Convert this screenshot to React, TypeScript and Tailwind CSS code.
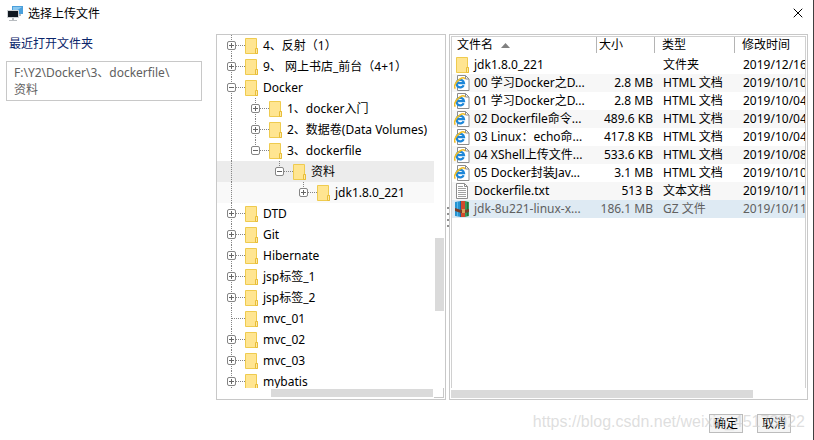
import type { ReactNode } from "react";
import { X } from "lucide-react";
import clsx from "clsx";

type TreeNode = {
  name: string;
  depth: number;
  state: "open" | "closed" | "leaf";
};

const tree: TreeNode[] = [
  { name: "4、反射（1）", depth: 0, state: "closed" },
  { name: "9、 网上书店_前台（4+1）", depth: 0, state: "closed" },
  { name: "Docker", depth: 0, state: "open" },
  { name: "1、docker入门", depth: 1, state: "closed" },
  { name: "2、数据卷(Data Volumes)", depth: 1, state: "closed" },
  { name: "3、dockerfile", depth: 1, state: "open" },
  { name: "资料", depth: 2, state: "open" },
  { name: "jdk1.8.0_221", depth: 3, state: "closed" },
  { name: "DTD", depth: 0, state: "closed" },
  { name: "Git", depth: 0, state: "closed" },
  { name: "Hibernate", depth: 0, state: "closed" },
  { name: "jsp标签_1", depth: 0, state: "closed" },
  { name: "jsp标签_2", depth: 0, state: "closed" },
  { name: "mvc_01", depth: 0, state: "leaf" },
  { name: "mvc_02", depth: 0, state: "closed" },
  { name: "mvc_03", depth: 0, state: "closed" },
  { name: "mybatis", depth: 0, state: "closed" },
];

const files = [
  { icon: "folder", name: "jdk1.8.0_221", size: "", type: "文件夹", date: "2019/12/16" },
  { icon: "html", name: "00 学习Docker之D...", size: "2.8 MB", type: "HTML 文档", date: "2019/10/10" },
  { icon: "html", name: "01 学习Docker之D...", size: "2.8 MB", type: "HTML 文档", date: "2019/10/04" },
  { icon: "html", name: "02 Dockerfile命令...", size: "489.6 KB", type: "HTML 文档", date: "2019/10/04" },
  { icon: "html", name: "03 Linux：echo命...", size: "417.8 KB", type: "HTML 文档", date: "2019/10/04" },
  { icon: "html", name: "04 XShell上传文件...", size: "533.6 KB", type: "HTML 文档", date: "2019/10/08" },
  { icon: "html", name: "05 Docker封装Jav...", size: "3.1 MB", type: "HTML 文档", date: "2019/10/10" },
  { icon: "text", name: "Dockerfile.txt", size: "513 B", type: "文本文档", date: "2019/10/11" },
  { icon: "archive", name: "jdk-8u221-linux-x...", size: "186.1 MB", type: "GZ 文件", date: "2019/10/11" },
];

function FolderIcon() {
  return (
    <svg width="14" height="16" viewBox="0 0 14 16" className="shrink-0">
      <path d="M.5.5h11v10h1v5H.5z" fill="#ffe591" stroke="#efcb4f" />
      <path d="M10.5 10.5h2v5h-2z" fill="#ffeaa5" stroke="#e8bd38" />
    </svg>
  );
}

function HtmlIcon() {
  return (
    <svg width="16" height="16" viewBox="0 0 16 16" className="shrink-0">
      <path d="M3.5.5h8l3.500 3.500v11.500h-11.500z" fill="#fff" stroke="#8c8c8c" />
      <path d="M11.500.5v3.500h3.500" fill="none" stroke="#8c8c8c" />
      <path d="M9.700 10.200A3.800 3.800 0 1 1 10 8.200H3" fill="none" stroke="#1c86d8" strokeWidth="2.200" />
      <path d="M1.500 13.500C-1 12 2 6.500 6 4c2.500-1.600 4.500-1.700 4.700.2" fill="none" stroke="#f0bd27" strokeWidth="1.500" />
    </svg>
  );
}

function TextIcon() {
  return (
    <svg width="16" height="16" viewBox="0 0 16 16" className="shrink-0">
      <path d="M2.500.5h8l3 3v12h-11z" fill="#fff" stroke="#8c8c8c" />
      <path d="M10.500.5v3h3" fill="none" stroke="#8c8c8c" />
      <path d="M4 3.500h5M4 5.500h8M4 7.500h8M4 9.500h8M4 11.500h8M4 13.500h8" stroke="#a0a0a0" />
    </svg>
  );
}

function ArchiveIcon() {
  return (
    <svg width="16" height="16" viewBox="0 0 16 16" className="shrink-0">
      <path d="M1 1l6-1v16l-6-1z" fill="#2594d2" />
      <path d="M7 0h4v16H7z" fill="#d2492c" />
      <path d="M11 0l4 1v14l-4 1z" fill="#37955a" />
      <path d="M3.500 1v14" stroke="#56b6e8" />
      <path d="M6.500 0v16" stroke="#176a9c" />
      <path d="M13.500 1v14" stroke="#23713b" />
      <path d="M1 7l6 2h4l4-1v3l-4 1H7l-6-2z" fill="#7b3f28" />
      <path d="M8 8h3v4H8z" fill="#d9a25a" />
    </svg>
  );
}

const icons: Record<string, ReactNode> = {
  folder: <FolderIcon />,
  html: <HtmlIcon />,
  text: <TextIcon />,
  archive: <ArchiveIcon />,
};

function AppIcon() {
  return (
    <svg width="16" height="16" viewBox="0 0 16 16" className="shrink-0">
      <path d="M5 0h11v8H5z" fill="#4ba0dc" />
      <path d="M6 1h9L6 7z" fill="#8bc8ef" />
      <path d="M12 8h2v2h-2z" fill="#b8bcc0" />
      <path d="M0 4h12v8H0z" fill="#cfd3d6" />
      <path d="M1 5h10v6H1z" fill="#111820" />
      <path d="M5 12h2v2H5zM2 14h8v1H2z" fill="#b8bcc0" />
    </svg>
  );
}

// The vertical guide of a top-level folder, seen beside its children
function Rail() {
  return (
    <svg width="24" height="21" viewBox="0 0 24 21" className="shrink-0">
      <path d="M10.500 0v21" stroke="#858585" strokeDasharray="1 1" />
    </svg>
  );
}

function Branch({ state, last }: { state: TreeNode["state"]; last: boolean }) {
  return (
    <svg width="24" height="21" viewBox="0 0 24 21" className="shrink-0">
      <path d={last ? "M10.500 0v10" : "M10.500 0v21"} stroke="#858585" strokeDasharray="1 1" />
      <path d="M11 10.500h13" stroke="#858585" strokeDasharray="1 1" />
      {state !== "leaf" && (
        <>
          <rect x="6.500" y="6.500" width="8" height="8" rx="1.500" fill="#fff" stroke="#858585" />
          <path d="M8 10.500h5" stroke="#666" />
          {state === "closed" && <path d="M10.500 8v5" stroke="#666" />}
        </>
      )}
    </svg>
  );
}

function FolderTree() {
  return (
    <ul className="min-h-0 flex-1 overflow-hidden">
      {tree.map((node, index) => (
        <li key={node.name}>
          <button
            type="button"
            className={clsx(
              "flex h-[21px] w-full items-center whitespace-nowrap pl-1 text-left",
              node.depth === 2 && "bg-[#ececec]",
              node.depth === 3 && "bg-[#f9f9f9]",
            )}
          >
            {node.depth > 0 && <Rail />}
            {node.depth > 1 && <span className="w-6 shrink-0" />}
            {node.depth > 2 && <span className="w-6 shrink-0" />}
            <Branch
              state={node.state}
              last={node.depth > 0 && tree[index + 1]?.depth !== node.depth}
            />
            <FolderIcon />
            <span className="pl-1">{node.name}</span>
          </button>
        </li>
      ))}
    </ul>
  );
}

function FileTable() {
  return (
    <table className="w-full table-fixed border-collapse whitespace-nowrap">
      <colgroup>
        <col className="w-[145px]" />
        <col className="w-[58px]" />
        <col className="w-20" />
        <col />
      </colgroup>
      <thead>
        <tr className="h-[19px] text-left align-top">
          <th className="p-0 font-normal">
            <div className="flex h-4 items-center gap-2 border-r border-[#b4b4b4] pl-[5px]">
              文件名
              <svg width="9" height="5" viewBox="0 0 9 5">
                <path d="M4.500 0L9 5H0z" fill="#808080" />
              </svg>
            </div>
          </th>
          <th className="p-0 font-normal">
            <div className="flex h-4 items-center border-r border-[#b4b4b4] pl-0.5">大小</div>
          </th>
          <th className="p-0 font-normal">
            <div className="flex h-4 items-center border-r border-[#b4b4b4] pl-[7px]">类型</div>
          </th>
          <th className="p-0 font-normal">
            <div className="flex h-4 items-center pl-[7px]">修改时间</div>
          </th>
        </tr>
      </thead>
      <tbody className="leading-[18px]">
        {files.map((file) => (
          <tr
            key={file.name}
            className={clsx(
              "h-[18px]",
              file.icon === "archive" ? "bg-[#deeaf3] text-[#606060]" : "even:bg-[#f7f7f7]",
            )}
          >
            <td className="p-0">
              <div className="flex h-[18px] items-center pl-0.5">
                <span className={clsx("w-5 shrink-0", file.icon === "folder" && "pl-0.5")}>
                  {icons[file.icon]}
                </span>
                {file.name}
              </div>
            </td>
            <td className="p-0 pr-0.5 text-right">{file.size}</td>
            <td className="p-0 pl-2">{file.type}</td>
            <td className="p-0 pl-2">{file.date}</td>
          </tr>
        ))}
      </tbody>
    </table>
  );
}

export default function App() {
  return (
    <div className="flex h-screen flex-col overflow-hidden border-r border-[#404040] bg-white font-['Noto_Sans','Noto_Sans_CJK_SC',sans-serif] text-[12px] text-black">
      <header className="flex h-[34px] items-start justify-between pt-1 pr-[7px] pl-[7px]">
        <div className="flex h-5 items-center gap-[5px]">
          <AppIcon />
          <h1>选择上传文件</h1>
        </div>
        <button type="button" aria-label="关闭" className="pt-px">
          <X size={16} strokeWidth={1.5} />
        </button>
      </header>

      <main className="flex min-h-0 flex-1 pr-[5px]">
        <aside className="w-[216px] shrink-0 pr-3.5 pl-1.5">
          <h2 className="pt-px pb-2 pl-[3px] leading-[18px] text-[#0a246a]">最近打开文件夹</h2>
          <a href="#recent" className="block border border-[#c8c8c8] px-[7px] py-0.5 leading-[17px] text-[#606060]">
            F:\Y2\Docker\3、dockerfile\
            <br />
            资料
          </a>
        </aside>

        <section className="flex w-[230px] shrink-0 flex-col border border-[#c8c8c8]">
          <div className="flex min-h-0 flex-1">
            <FolderTree />
            <div className="w-[11px] px-px pt-[203px]">
              <div className="h-[73px] bg-[#dadada]" />
            </div>
          </div>
          <div className="flex h-[11px] justify-between pb-px pl-[54px]">
            <div className="my-px w-[162px] bg-[#dadada]" />
            <div className="mr-px w-2.5 border-r border-b border-[#c8c8c8]" />
          </div>
        </section>

        <div className="flex w-[3px] flex-col items-center justify-center gap-1">
          {[0, 1, 2, 3].map((dot) => (
            <span key={dot} className="size-0.5 bg-[#909090]" />
          ))}
        </div>

        <section className="flex min-w-0 flex-1 flex-col border border-[#c8c8c8] p-px">
          <div className="min-h-0 flex-1 overflow-hidden border-x border-t border-[#d0d0d0]">
            <FileTable />
          </div>
          <div className="flex h-2.5 pt-0.5">
            <div className="w-[85%] bg-[#dadada]" />
          </div>
        </section>
      </main>

      <footer className="relative flex h-10 items-start justify-end gap-3.5 pt-3.5 pr-[22px]">
        <button type="button" className="h-[19px] w-[34px] border border-[#bcbcbc] bg-[#f4f4f4] leading-none">
          确定
        </button>
        <button type="button" className="h-[19px] w-[34px] border border-[#bcbcbc] bg-[#f4f4f4] leading-none">
          取消
        </button>
        <span className="pointer-events-none absolute top-3 right-2 font-['Liberation_Sans',sans-serif] text-[16px] leading-5 text-[#d0d0d0]/70">
          https://blog.csdn.net/weixin_45173922
        </span>
      </footer>
    </div>
  );
}
